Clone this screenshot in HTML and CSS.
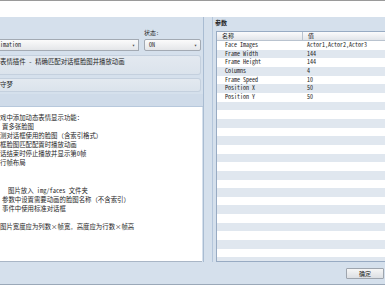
FILE: index.html
```html
<!DOCTYPE html>
<html lang="zh">
<head>
    <meta charset="UTF-8">
    <title>插件管理器</title>
    <link rel="stylesheet" href="styles.css">
</head>
<body>
    <div class="window">
        <div class="topbar"></div>
        <div class="dialog">
            <div class="panes">
                <div class="left">
                    <div class="fields">
                        <span class="label status-label">状态:</span>
                        <div class="select name-select">imation<span class="arrow">▾</span></div>
                        <div class="select status-select">ON<span class="arrow">▾</span></div>
                    </div>
                    <div class="box desc">表情插件 - 精确匹配对话框脸图并播放动画</div>
                    <div class="box author">守梦</div>
                    <div class="help-band"></div>
                    <div class="help">
                        <div>戏中添加动态表情显示功能：</div>
                        <div class="in1">置多张脸图</div>
                        <div>测对话框使用的脸图（含索引格式）</div>
                        <div>框脸图匹配配置时播放动画</div>
                        <div>话结束时停止播放并显示第0帧</div>
                        <div>行帧布局</div>
                        <div>&nbsp;</div>
                        <div>&nbsp;</div>
                        <div class="in3">图片放入 img/faces 文件夹</div>
                        <div class="in1">参数中设置需要动画的脸图名称（不含索引）</div>
                        <div class="in1">事件中使用标准对话框</div>
                        <div>&nbsp;</div>
                        <div>图片宽度应为列数×帧宽, 高度应为行数×帧高</div>
                    </div>
                </div>
                <div class="right">
                    <div class="params-title">参数</div>
                    <div class="table">
                        <div class="row head"><span class="c-name">名称</span><span class="c-val">值</span></div>
                        <div class="row"><span class="c-name">Face Images</span><span class="c-val">Actor1,Actor2,Actor3</span></div>
                        <div class="row"><span class="c-name">Frame Width</span><span class="c-val">144</span></div>
                        <div class="row"><span class="c-name">Frame Height</span><span class="c-val">144</span></div>
                        <div class="row"><span class="c-name">Columns</span><span class="c-val">4</span></div>
                        <div class="row"><span class="c-name">Frame Speed</span><span class="c-val">10</span></div>
                        <div class="row"><span class="c-name">Position X</span><span class="c-val">50</span></div>
                        <div class="row"><span class="c-name">Position Y</span><span class="c-val">50</span></div>
                        <div class="row"></div><div class="row"></div><div class="row"></div>
                        <div class="row"></div><div class="row"></div><div class="row"></div>
                        <div class="row"></div><div class="row"></div><div class="row"></div>
                        <div class="row"></div><div class="row"></div><div class="row"></div>
                        <div class="row"></div><div class="row"></div><div class="row"></div>
                        <div class="row"></div><div class="row"></div><div class="row"></div>
                        <div class="row"></div>
                    </div>
                </div>
            </div>
            <div class="footer">
                <button class="ok">确定</button>
            </div>
        </div>
    </div>
</body>
</html>
```

FILE: styles.css
```css
body {
    margin: 0;
    width: 385px;
    height: 285px;
    overflow: hidden;
    font-family: "Noto Sans Mono CJK SC", "Liberation Mono", "Noto Sans CJK SC", monospace;
    font-size: 6px;
    color: #1e1e1e;
}
.window {
    height: 285px;
    display: flex;
    flex-direction: column;
}
.topbar {
    height: 16px;
    background: #fff;
    border-top: 1px solid #9a9a9a;
}
.dialog {
    flex: 1;
    background: #d5e0ec;
    display: flex;
    flex-direction: column;
    border-bottom: 1px solid #9aa8b8;
}
.panes {
    display: flex;
    height: 245px;
}
.left {
    width: 203px;
    border-right: 1px solid #a9bcd2;
    display: flex;
    flex-direction: column;
}
.fields {
    display: grid;
    grid-template-columns: 139px 57px;
    grid-template-rows: 10px 12px;
    column-gap: 5px;
    row-gap: 1px;
    margin-top: 11px;
}
.label {
    line-height: 10px;
}
.status-label {
    grid-column: 2;
}
.name-select {
    grid-row: 2;
    grid-column: 1;
}
.status-select {
    grid-row: 2;
    grid-column: 2;
    padding-left: 4px;
}
.select {
    position: relative;
    height: 10px;
    line-height: 10px;
    border: 1px solid #a3aab3;
    border-left: none;
    background: linear-gradient(#fbfbfb, #e4e6e9);
}
.status-select {
    border-left: 1px solid #a3aab3;
    border-radius: 2px;
}
.arrow {
    position: absolute;
    right: 3px;
    top: 0;
    font-size: 5px;
    color: #444;
}
.box {
    background: linear-gradient(#e3e9f0, #dbe3ec);
    border: 1px solid #c4d0de;
    border-left: none;
    border-radius: 0 3px 3px 0;
    margin-right: 2px;
    font-size: 6.4px;
}
.desc {
    margin-top: 4px;
    height: 18px;
    line-height: 12px;
}
.author {
    margin-top: 3px;
    height: 12px;
    line-height: 12px;
}
.help-band {
    height: 12px;
    margin-top: 2px;
    background: #cfdbe9;
    border-bottom: 1px solid #b7c8dc;
}
.help {
    flex: 1;
    background: #fff;
    margin-right: 1px;
    padding-top: 6px;
    font-size: 6.4px;
    line-height: 9.1px;
    border-bottom: 1px solid #a9b6c6;
    white-space: nowrap;
}
.in1 {
    padding-left: 2px;
}
.in3 {
    padding-left: 8px;
}
.right {
    flex: 1;
    margin-left: 8px;
    display: flex;
    flex-direction: column;
    border-left: 1px solid #b4c6db;
}
.params-title {
    font-weight: bold;
    height: 14px;
    line-height: 8px;
    padding-top: 2px;
    padding-left: 2px;
    box-sizing: border-box;
}
.table {
    flex: 1;
    margin-left: 3px;
    border-left: 1px solid #98abc3;
    border-top: 1px solid #98abc3;
    border-bottom: 1px solid #98abc3;
    overflow: hidden;
    background: #fff;
}
.row {
    display: flex;
    height: 8.67px;
    line-height: 8.67px;
    white-space: nowrap;
}
.row:nth-child(odd) {
    background: #e0e7ef;
}
.row.head {
    height: 8px;
    line-height: 8px;
    background: linear-gradient(#fbfbfc, #e2e5ea);
    border-bottom: 1px solid #b9c3cf;
}
.c-name {
    width: 77px;
    padding-left: 8px;
    flex: none;
}
.c-val {
    padding-left: 5px;
}
.head .c-name {
    padding-left: 5px;
    width: 80px;
    border-right: 1px solid #b9c3cf;
}
.footer {
    flex: 1;
    display: flex;
    justify-content: flex-end;
    align-items: center;
    padding-right: 1px;
}
.ok {
    width: 38px;
    height: 11px;
    padding: 0;
    font-family: inherit;
    font-size: 6px;
    line-height: 9px;
    color: #222;
    border: 1px solid #9ea5ae;
    border-radius: 1px;
    background: linear-gradient(#f6f6f6, #dcdfe3);
}
```
